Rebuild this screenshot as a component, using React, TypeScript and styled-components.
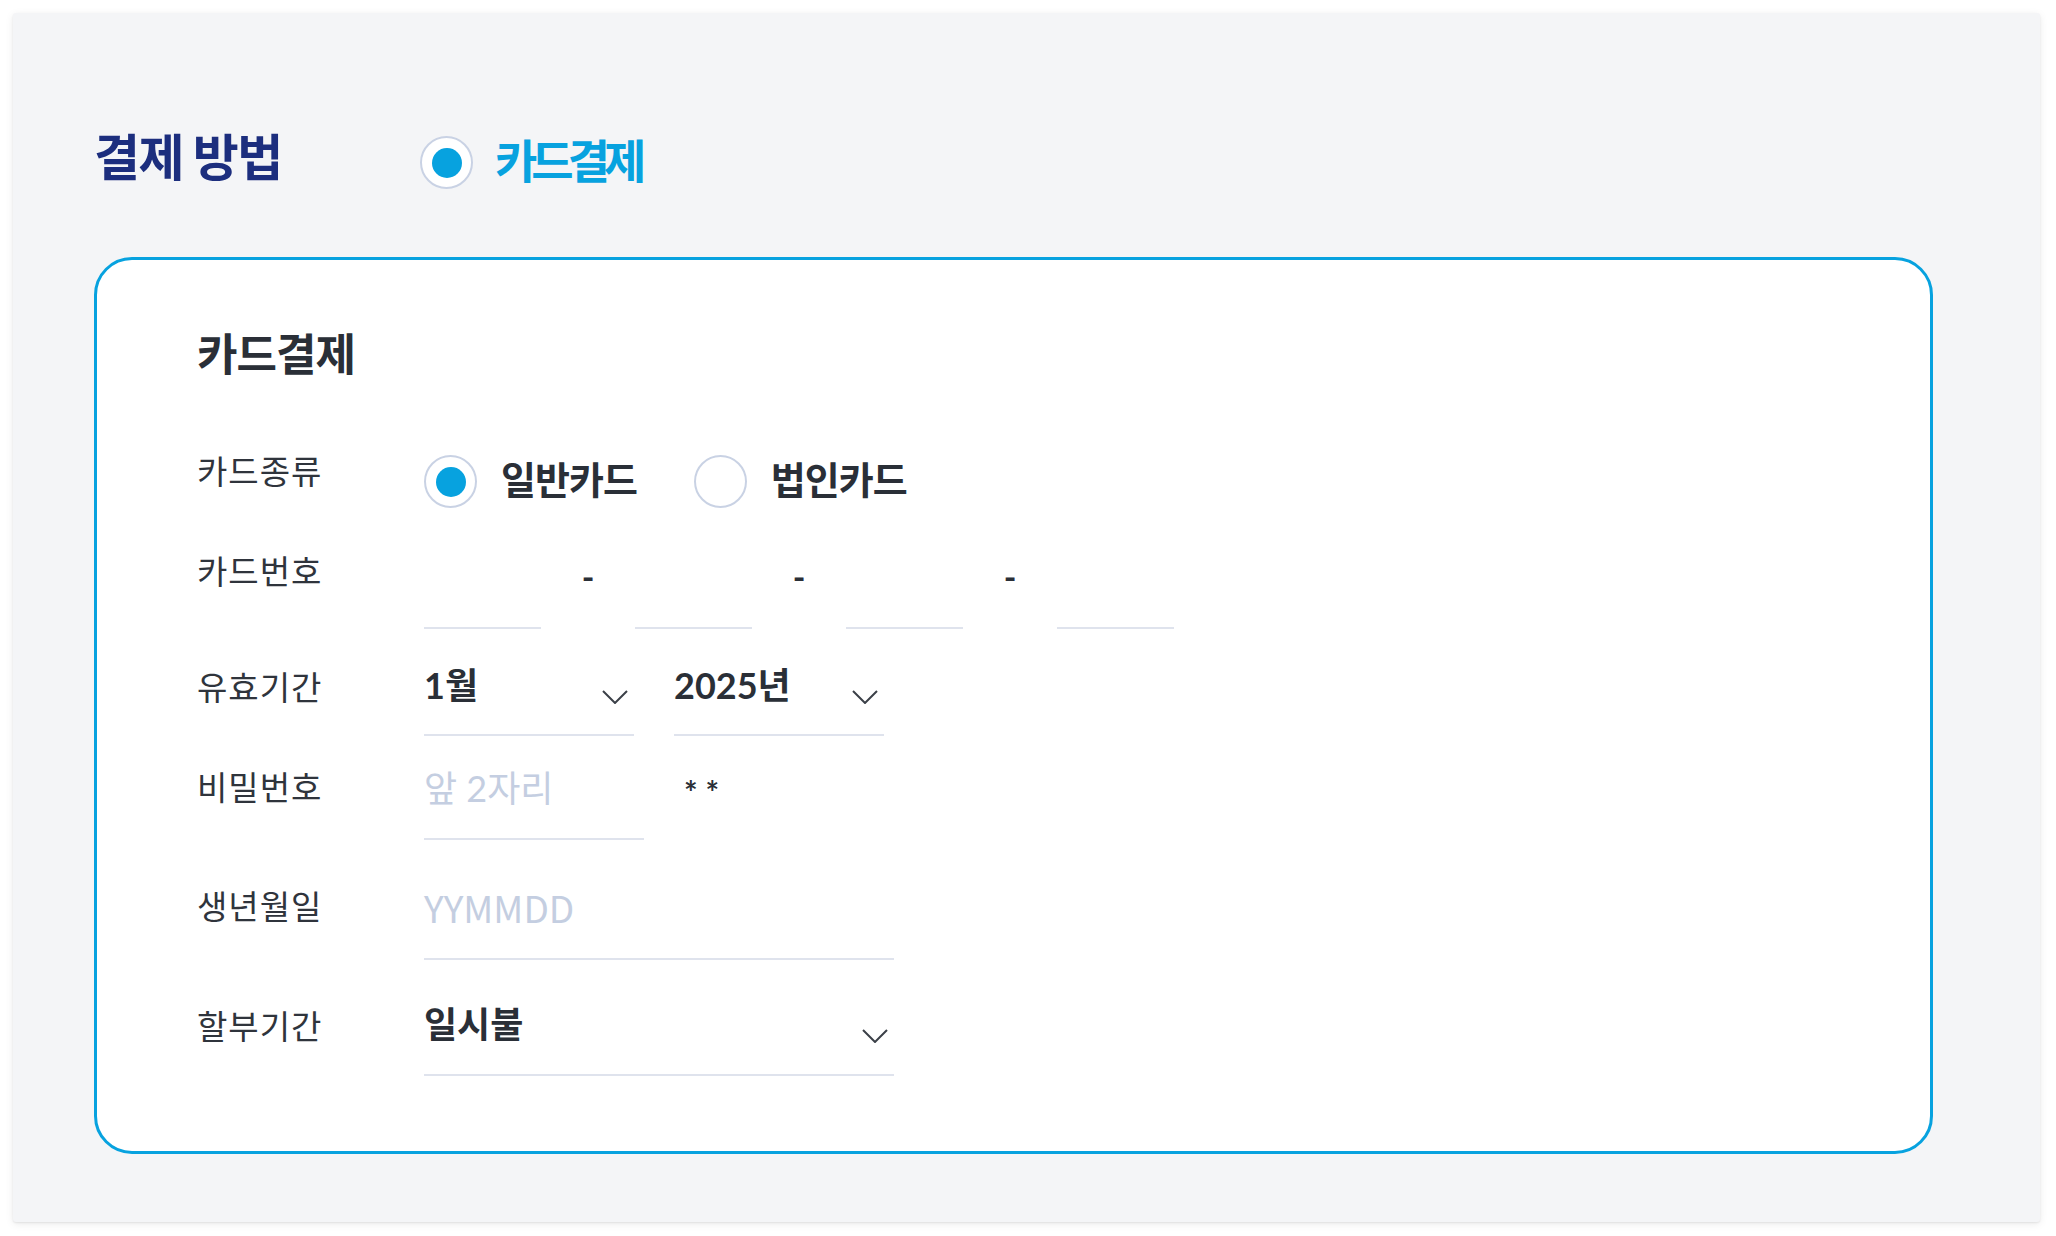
import React from "react";
import styled, { createGlobalStyle } from "styled-components";

const KR = `"Noto Sans CJK KR", "Noto Sans", sans-serif`;
const MIX = `Lato, "Noto Sans CJK KR", sans-serif`;

const GlobalStyle = createGlobalStyle`
  html, body { margin: 0; padding: 0; background: #ffffff; }
  body { font-family: ${MIX}; color: #2b3038; }
  * { box-sizing: border-box; }
`;

const Page = styled.div`
  padding: 13px;
`;

const Panel = styled.section`
  width: 2027px;
  height: 1209px;
  background: #f4f5f7;
  border-radius: 3px;
  box-shadow: 0 1px 2px rgba(0, 0, 0, 0.08), 0 2px 8px rgba(0, 0, 0, 0.08);
  padding: 123px 107px 0 81px;
`;

const HeadRow = styled.div`
  display: flex;
  align-items: flex-start;
  height: 53px;
`;

const Heading = styled.h2`
  margin: 0;
  width: 326px;
  flex: none;
  font-family: ${KR};
  font-weight: 700;
  font-size: 50px;
  line-height: 36px;
  letter-spacing: -1.5px;
  color: #1c2e7e;
`;

const RadioCircle = styled.span<{ $checked?: boolean }>`
  flex: none;
  width: 53px;
  height: 53px;
  border-radius: 50%;
  border: 2px solid #c9d2e4;
  background: #ffffff;
  display: flex;
  align-items: center;
  justify-content: center;
  &::after {
    content: "";
    width: 30px;
    height: 30px;
    border-radius: 50%;
    background: ${(p) => (p.$checked ? "#07a2df" : "transparent")};
  }
`;

const MethodLabel = styled.span`
  margin-left: 22px;
  font-family: ${KR};
  font-weight: 700;
  font-size: 46px;
  line-height: 44px;
  letter-spacing: -6px;
  color: #07a2df;
`;

const Card = styled.div`
  margin-top: 68px;
  border: 3px solid #07a2df;
  border-radius: 38px;
  background: #ffffff;
  padding: 67px 0 75px 100px;
`;

const CardTitle = styled.h3`
  margin: 0;
  font-family: ${KR};
  font-weight: 700;
  font-size: 44px;
  line-height: 50px;
  letter-spacing: -1px;
  color: #2a2f37;
`;

const Row = styled.div<{ $gap: number }>`
  display: flex;
  align-items: flex-start;
  margin-top: ${(p) => p.$gap}px;
`;

const Label = styled.div`
  flex: none;
  width: 227px;
  font-family: ${KR};
  font-size: 33px;
  line-height: 34px;
  letter-spacing: 1px;
  color: #2f343c;
`;

const RadioGroup = styled.div`
  display: flex;
  align-items: flex-start;
  gap: 57px;
  margin-top: 2px;
`;

const Option = styled.label`
  display: flex;
  align-items: flex-start;
`;

const OptionText = styled.span`
  margin-left: 24px;
  font-family: ${KR};
  font-weight: 700;
  font-size: 38px;
  line-height: 45px;
  letter-spacing: -1px;
  color: #2a2f37;
`;

const FieldLine = styled.div`
  display: flex;
  align-items: flex-start;
`;

const Field = styled.div<{ $w: number; $h: number }>`
  flex: none;
  width: ${(p) => p.$w}px;
  height: ${(p) => p.$h}px;
  border-bottom: 2px solid #dfe3ed;
  display: flex;
  align-items: flex-start;
  justify-content: space-between;
`;

const Dash = styled.span`
  flex: none;
  width: 94px;
  text-align: center;
  font-family: Lato, sans-serif;
  font-size: 34px;
  font-weight: 700;
  line-height: 47px;
  color: #2a2f37;
`;

const Value = styled.span`
  font-family: ${MIX};
  font-weight: 700;
  font-size: 36px;
  line-height: 32px;
  color: #2a2f37;
`;

const Placeholder = styled.span<{ $size: number; $latin?: boolean }>`
  font-family: ${(p) => (p.$latin ? KR : MIX)};
  font-size: ${(p) => p.$size}px;
  line-height: 38px;
  color: #c4cee1;
`;

const Masked = styled.span`
  margin-left: 40px;
  font-family: Lato, sans-serif;
  font-weight: 700;
  font-size: 32px;
  line-height: 48px;
  color: #2a2f37;
`;

const Gap = styled.span`
  flex: none;
  width: 40px;
`;

const ChevronIcon = styled.svg`
  flex: none;
  margin-top: 21px;
  margin-right: 6px;
`;

const Chevron = () => (
  <ChevronIcon width="26" height="14" viewBox="0 0 26 14" aria-hidden="true">
    <polyline points="1,1 13,13 25,1" fill="none" stroke="#3b4048" strokeWidth="2" />
  </ChevronIcon>
);

const Select = ({ w, h, value }: { w: number; h: number; value: string }) => (
  <Field $w={w} $h={h}>
    <Value>{value}</Value>
    <Chevron />
  </Field>
);

export default function App() {
  return (
    <>
      <GlobalStyle />
      <Page>
        <Panel>
          <HeadRow>
            <Heading>결제 방법</Heading>
            <RadioCircle $checked />
            <MethodLabel>카드결제</MethodLabel>
          </HeadRow>
          <Card>
            <CardTitle>카드결제</CardTitle>

            <Row $gap={76}>
              <Label>카드종류</Label>
              <RadioGroup>
                <Option>
                  <RadioCircle $checked />
                  <OptionText>일반카드</OptionText>
                </Option>
                <Option>
                  <RadioCircle />
                  <OptionText>법인카드</OptionText>
                </Option>
              </RadioGroup>
            </Row>

            <Row $gap={45}>
              <Label>카드번호</Label>
              <FieldLine>
                <Field $w={117} $h={76} />
                <Dash>-</Dash>
                <Field $w={117} $h={76} />
                <Dash>-</Dash>
                <Field $w={117} $h={76} />
                <Dash>-</Dash>
                <Field $w={117} $h={76} />
              </FieldLine>
            </Row>

            <Row $gap={40}>
              <Label>유효기간</Label>
              <FieldLine>
                <Select w={210} h={67} value="1월" />
                <Gap />
                <Select w={210} h={67} value="2025년" />
              </FieldLine>
            </Row>

            <Row $gap={33}>
              <Label>비밀번호</Label>
              <FieldLine>
                <Field $w={220} $h={71}>
                  <Placeholder $size={36}>앞 2자리</Placeholder>
                </Field>
                <Masked>* *</Masked>
              </FieldLine>
            </Row>

            <Row $gap={48}>
              <Label>생년월일</Label>
              <Field $w={470} $h={72}>
                <Placeholder $size={37} $latin>YYMMDD</Placeholder>
              </Field>
            </Row>

            <Row $gap={48}>
              <Label>할부기간</Label>
              <Select w={470} h={68} value="일시불" />
            </Row>
          </Card>
        </Panel>
      </Page>
    </>
  );
}
